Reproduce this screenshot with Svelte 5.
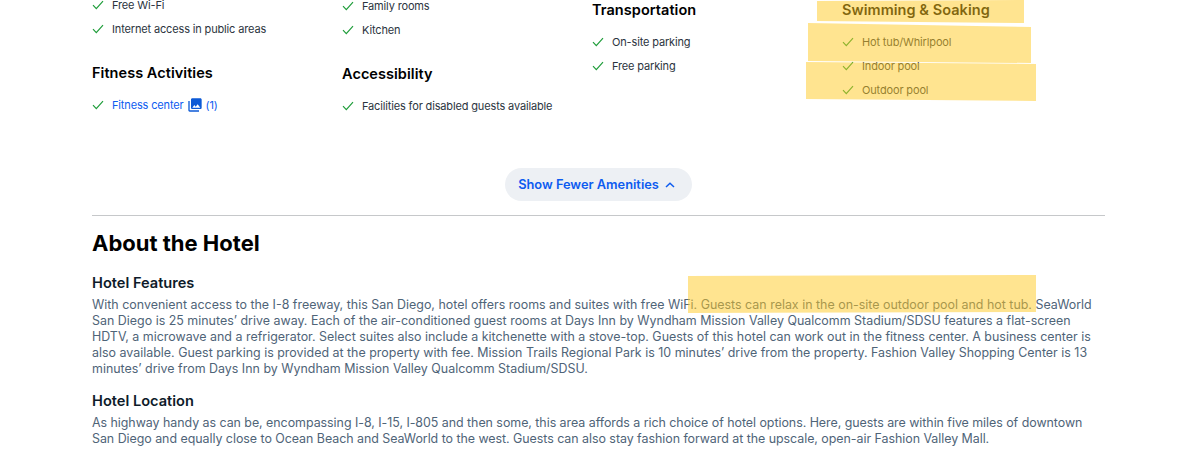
<script>
	const columns = [
		{
			groups: [
				{ items: [{ label: 'Free Wi-Fi' }, { label: 'Internet access in public areas' }] },
				{ title: 'Fitness Activities', items: [{ label: 'Fitness center', photos: 1 }] }
			]
		},
		{
			offset: true,
			groups: [
				{ items: [{ label: 'Family rooms' }, { label: 'Kitchen' }] },
				{ title: 'Accessibility', items: [{ label: 'Facilities for disabled guests available' }] }
			]
		},
		{
			groups: [{ title: 'Transportation', items: [{ label: 'On-site parking' }, { label: 'Free parking' }] }]
		},
		{
			groups: [
				{
					title: 'Swimming & Soaking',
					items: [{ label: 'Hot tub/Whirlpool' }, { label: 'Indoor pool' }, { label: 'Outdoor pool' }]
				}
			]
		}
	];

	// marker strokes drawn over the page, in page coordinates
	const highlights = [
		'817,1 1024,0 1024,23 817,21',
		'808,23 1031,27 1031,63 808,61',
		'806,62 1036,64 1036,101 806,99',
		'688,276 1036,275 1036,312 688,313'
	];
</script>

<div class="page">
	<div class="content">
		<div class="amenities">
			{#each columns as col}
				<div class="column" class:offset={col.offset}>
					{#each col.groups as group}
						<div class="group">
							{#if group.title}
								<h3>{group.title}</h3>
							{/if}
							<ul>
								{#each group.items as item}
									<li>
										<svg class="check" viewBox="0 0 12 10" width="12" height="10" aria-hidden="true">
											<path d="M1 5.2 4.3 8.6 11 1.2" fill="none" stroke="#1f9d3a" stroke-width="1.2" />
										</svg>
										{#if item.photos}
											<span class="link">{item.label}</span>
											<svg class="photos" viewBox="0 0 24 24" width="16" height="16" aria-hidden="true">
												<path
													d="M22 16V4c0-1.1-.9-2-2-2H8c-1.1 0-2 .9-2 2v12c0 1.1.9 2 2 2h12c1.1 0 2-.9 2-2zm-11-4 2.03 2.71L16 11l4 5H8l3-4zM2 6v14c0 1.1.9 2 2 2h14v-2H4V6H2z"
													fill="#0d5ad6"
												/>
											</svg>
											<span class="link">({item.photos})</span>
										{:else}
											<span>{item.label}</span>
										{/if}
									</li>
								{/each}
							</ul>
						</div>
					{/each}
				</div>
			{/each}
		</div>

		<div class="toggle">
			<button type="button">
				Show Fewer Amenities
				<svg viewBox="0 0 10 6" width="10" height="6" aria-hidden="true">
					<path d="M1 5 5 1.2 9 5" fill="none" stroke="#0d5cf0" stroke-width="1.5" />
				</svg>
			</button>
		</div>

		<section class="about">
			<h2>About the Hotel</h2>
			<h4>Hotel Features</h4>
			<p>
				With convenient access to the I-8 freeway, this San Diego, hotel offers rooms and suites with free WiFi. Guests can relax in the on-site outdoor pool and hot tub. SeaWorld San Diego is 25 minutes’ drive away. Each of the air-conditioned guest rooms at Days Inn by Wyndham Mission Valley Qualcomm Stadium/SDSU features a flat-screen HDTV, a microwave and a refrigerator. Select suites also include a kitchenette with a stove-top. Guests of this hotel can work out in the fitness center. A business center is also available. Guest parking is provided at the property with fee. Mission Trails Regional Park is 10 minutes’ drive from the property. Fashion Valley Shopping Center is 13 minutes’ drive from Days Inn by Wyndham Mission Valley Qualcomm Stadium/SDSU.
			</p>
			<h4>Hotel Location</h4>
			<p class="location">
				As highway handy as can be, encompassing I-8, I-15, I-805 and then some, this area affords a rich choice of hotel options. Here, guests are within five miles of downtown San Diego and equally close to Ocean Beach and SeaWorld to the west. Guests can also stay fashion forward at the upscale, open-air Fashion Valley Mall.
			</p>
		</section>
	</div>

	<svg class="marker" viewBox="0 0 1186 461" width="1186" height="461" aria-hidden="true">
		{#each highlights as points}
			<polygon {points} />
		{/each}
	</svg>
</div>

<style>
	:global(body) {
		background: #fff;
	}

	.page {
		position: relative;
		height: 461px;
		overflow: hidden;
		font-family: Inter, "Open Sans", sans-serif;
		color: #2b3440;
	}

	.content {
		width: 1013px;
		margin-left: 92px;
	}

	.amenities {
		display: grid;
		grid-template-columns: repeat(4, 250px);
		height: 175px;
		margin-top: -7px;
		align-items: start;
	}

	.column.offset {
		margin-top: 1px;
	}

	.group + .group {
		margin-top: 23px;
	}

	h3 {
		margin: 8px 0 11px;
		font-size: 14.5px;
		line-height: 18px;
		font-weight: 600;
		letter-spacing: 0.05px;
		color: #000;
	}

	ul {
		list-style: none;
		margin: 0;
		padding: 0;
	}

	li {
		display: flex;
		align-items: center;
		height: 24px;
		font-size: 11px;
		letter-spacing: -0.15px;
	}

	.check {
		margin-right: 8px;
		flex: none;
	}

	.link {
		color: #0d5cf0;
	}

	.photos {
		margin: 0 3px;
	}

	.toggle {
		display: flex;
		justify-content: center;
		padding-bottom: 14px;
		border-bottom: 1px solid #c6c8ca;
	}

	button {
		display: flex;
		align-items: center;
		gap: 6px;
		height: 33px;
		padding: 0 17px 0 13px;
		border: 0;
		border-radius: 17px;
		background: #edf0f4;
		color: #0d5cf0;
		font: 600 12.8px Inter, "Open Sans", sans-serif;
	}

	.about {
		padding-top: 14px;
	}

	h2 {
		margin: 0 0 18px;
		font-size: 22px;
		line-height: 26px;
		font-weight: 700;
		color: #000;
	}

	h4 {
		margin: 0 0 5px;
		font-size: 14.6px;
		line-height: 18px;
		font-weight: 600;
		color: #0e1b2a;
	}

	p {
		margin: 0 0 15px;
		font-size: 12.45px;
		line-height: 16px;
		color: #4f6478;
	}

	.location {
		letter-spacing: -0.045px;
	}

	.marker {
		position: absolute;
		top: 0;
		left: 0;
		pointer-events: none;
	}

	.marker polygon {
		fill: #ffc921;
		fill-opacity: 0.5;
	}
</style>
